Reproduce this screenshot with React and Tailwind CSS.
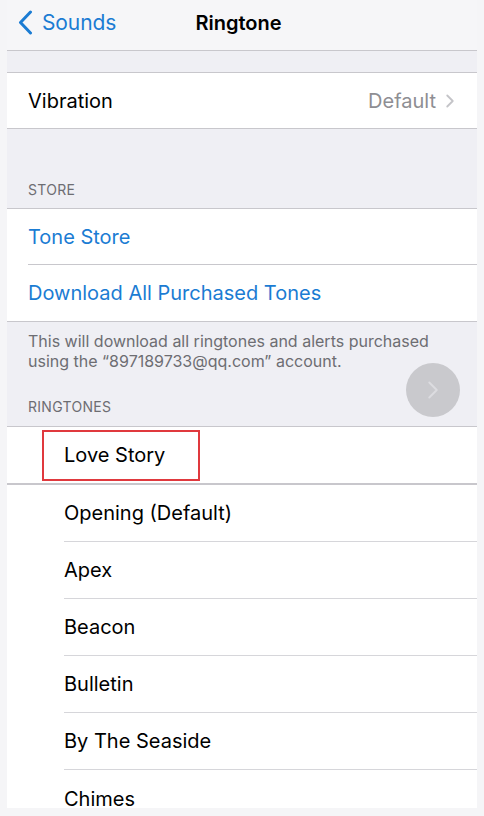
import { ChevronRight } from 'lucide-react';

const ringtones = ['Opening (Default)', 'Apex', 'Beacon', 'Bulletin', 'By The Seaside', 'Chimes'];

const App = () => {
  return (
    <div
      className="w-[484px] h-[816px] overflow-hidden bg-[#f5f5f7] px-[7px] pb-[8px]"
      style={{ fontFamily: 'Inter, "Liberation Sans", sans-serif' }}
    >
      <div className="relative h-full overflow-hidden bg-[#efeff4]">
        {/* Nav bar */}
        <div className="relative h-[51px] bg-[#f6f6f8] border-b border-[#c8c7cc] flex items-center pb-[5px]">
          <div className="flex items-center text-[#1b7cd3] pl-[11px]">
            <svg width="15" height="25" viewBox="0 0 15 25" fill="none">
              <polyline points="12.5,2 2.5,12.5 12.5,23" stroke="currentColor" strokeWidth="3" strokeLinecap="round" strokeLinejoin="round" />
            </svg>
            <span className="text-[21px] ml-[9px] tracking-[-0.1px]">Sounds</span>
          </div>
          <div className="absolute left-0 right-0 top-0 h-[46px] flex items-center justify-center text-[20px] font-semibold text-black pointer-events-none pr-[7px]">
            Ringtone
          </div>
        </div>

        {/* Vibration */}
        <div className="mt-[21px] bg-white border-y border-[#c8c7cc] h-[57px] flex items-center justify-between pl-[21px] pr-[16px]">
          <span className="text-[20px] text-black">Vibration</span>
          <div className="flex items-center text-[#8e8e93]">
            <span className="text-[20px]">Default</span>
            <ChevronRight className="w-[22px] h-[22px] ml-[3px] text-[#c4c4c8]" strokeWidth={2} />
          </div>
        </div>

        {/* Store */}
        <div className="pt-[50px] pb-[8px] pl-[21px] text-[14px] text-[#6d6d72] tracking-[0.3px]">STORE</div>
        <div className="bg-white border-y border-[#c8c7cc]">
          <div className="h-[55px] flex items-center pl-[21px] text-[20px] text-[#1b7cd3]">Tone Store</div>
          <div className="ml-[21px] border-t border-[#c8c7cc]" />
          <div className="h-[56px] flex items-center pl-[21px] text-[20px] text-[#1b7cd3]">Download All Purchased Tones</div>
        </div>
        <div className="pt-[9px] pl-[21px] pr-[30px] text-[16px] leading-[20px] text-[#6d6d72]">
          This will download all ringtones and alerts purchased using the “897189733@qq.com” account.
        </div>

        {/* Ringtones */}
        <div className="pt-[25px] pb-[9px] pl-[21px] text-[14px] text-[#6d6d72] tracking-[0.3px]">RINGTONES</div>
        <div className="bg-white border-t border-[#c8c7cc]">
          <div className="h-[58px] border-b-2 border-[#c8c7cc] flex items-center">
            <div className="ml-[35px] w-[158px] h-[51px] border-2 border-[#e0393e] flex items-center pl-[20px] text-[20px] text-black">
              Love Story
            </div>
          </div>
          {ringtones.map((name, i) => (
            <div key={name} className="pl-[57px]">
              <div className={`h-[57px] flex items-center text-[20px] text-black ${i < ringtones.length - 1 ? 'border-b border-[#d6d6da]' : ''}`}>
                {name}
              </div>
            </div>
          ))}
        </div>

        {/* Assistive touch */}
        <div className="absolute left-[399px] top-[363px] w-[54px] h-[54px] rounded-full bg-[#c9c9cd] flex items-center justify-center">
          <ChevronRight className="w-[30px] h-[30px] text-[#dcdce0]" strokeWidth={1.5} />
        </div>
      </div>
    </div>
  );
};

export default App;
